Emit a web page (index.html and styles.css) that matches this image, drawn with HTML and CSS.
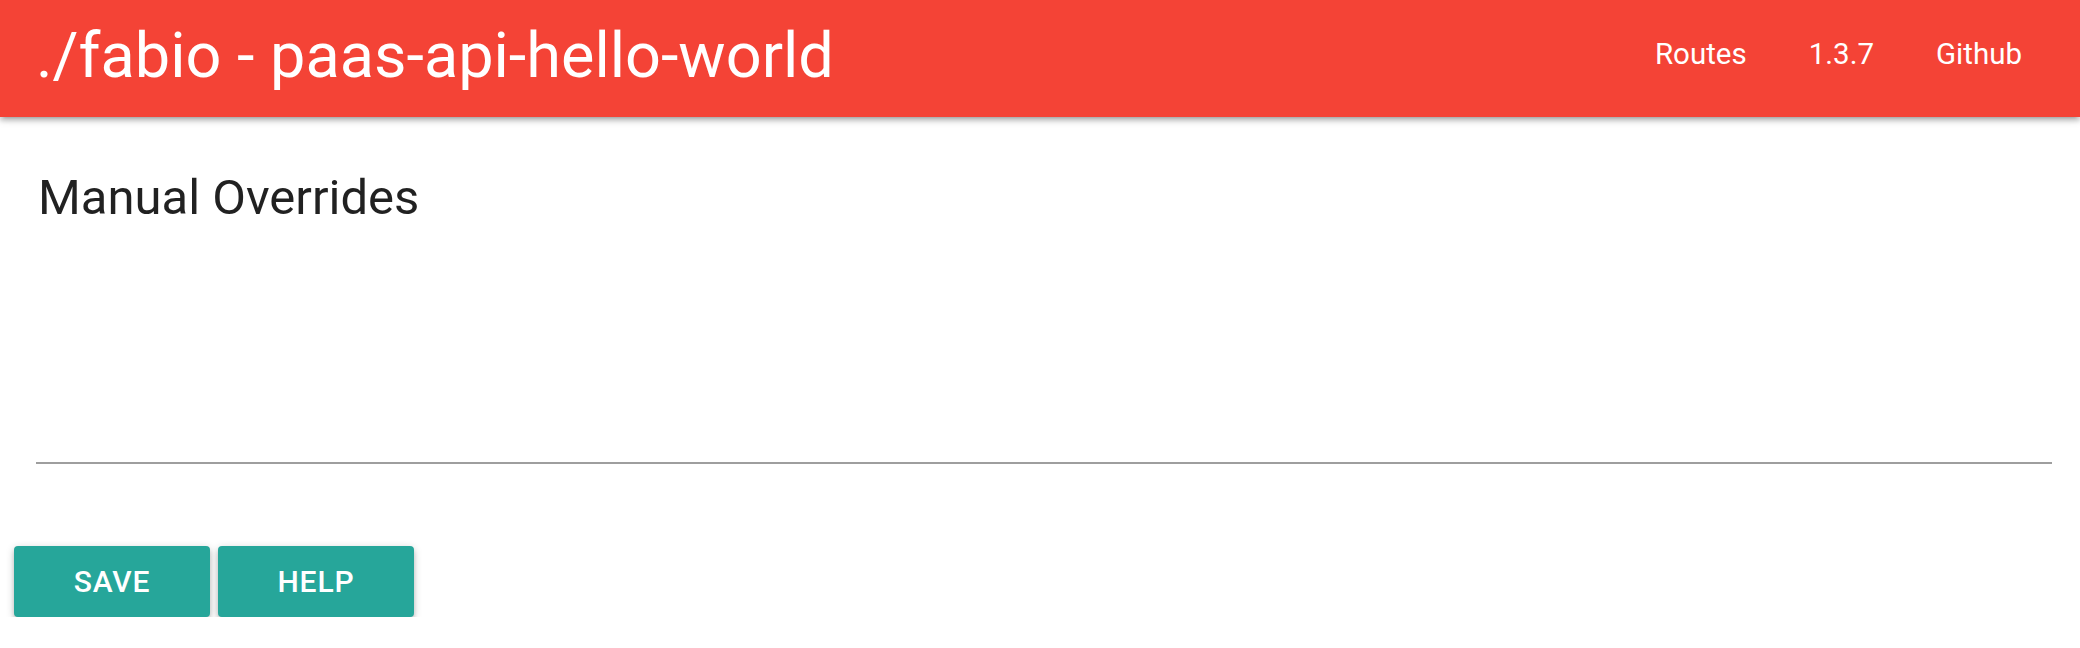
FILE: index.html
```html
<!DOCTYPE html>
<html lang="en">
<head>
    <meta charset="UTF-8">
    <meta name="viewport" content="width=device-width, initial-scale=1.0">
    <title>./fabio - paas-api-hello-world</title>
    <link rel="stylesheet" href="styles.css">
</head>
<body>
    <nav class="topnav">
        <a href="#" class="brand-logo">./fabio - paas-api-hello-world</a>
        <ul class="nav-links">
            <li><a href="#">Routes</a></li>
            <li><a href="#">1.3.7</a></li>
            <li><a href="#">Github</a></li>
        </ul>
    </nav>

    <div class="content">
        <h5 class="section-title">Manual Overrides</h5>

        <form id="overrideForm">
            <div class="input-field">
                <textarea id="overrides" class="overrides-text"></textarea>
            </div>
        </form>

        <div class="actions">
            <button type="button" class="btn">Save</button>
            <button type="button" class="btn">Help</button>
        </div>
    </div>
</body>
</html>
```

FILE: styles.css
```css
body {
    margin: 0;
    font-family: Roboto, "Liberation Sans", sans-serif;
    background-color: #fff;
    color: rgba(0,0,0,0.87);
}
a {
    text-decoration: none;
    color: #fff;
}
.topnav {
    height: 117px;
    background-color: #f44336;
    display: flex;
    justify-content: space-between;
    box-shadow: 0 4px 4px 0 rgba(0,0,0,0.14), 0 5px 2px -4px rgba(0,0,0,0.12), 0 2px 9px 0 rgba(0,0,0,0.2);
}
.brand-logo {
    font-size: 63px;
    line-height: 111px;
    padding-left: 36px;
    white-space: nowrap;
}
.nav-links {
    list-style: none;
    display: flex;
    margin: 0;
    padding: 0 27px 0 0;
}
.nav-links a {
    display: block;
    font-size: 29.5px;
    line-height: 108px;
    padding: 0 31px;
}
.content {
    padding-top: 54px;
}
.section-title {
    font-size: 49px;
    font-weight: 400;
    line-height: 1.1;
    margin: 0;
    padding-left: 38px;
}
.input-field {
    padding: 0 28px 0 36px;
}
.overrides-text {
    display: block;
    width: 100%;
    height: 239px;
    box-sizing: border-box;
    border: none;
    border-bottom: 2px solid #9e9e9e;
    background: transparent;
    resize: none;
    outline: none;
    font-family: inherit;
    font-size: 29px;
}
.actions {
    display: flex;
    gap: 8px;
    padding: 82px 0 0 14px;
}
.btn {
    width: 196px;
    height: 71px;
    background-color: #26a69a;
    color: #fff;
    border: none;
    border-radius: 4px;
    font-family: inherit;
    font-size: 30px;
    font-weight: 500;
    letter-spacing: 0.9px;
    text-transform: uppercase;
    cursor: pointer;
    box-shadow: 0 4px 4px 0 rgba(0,0,0,0.14), 0 5px 2px -4px rgba(0,0,0,0.12), 0 2px 9px 0 rgba(0,0,0,0.2);
}
.btn:hover {
    background-color: #2bbbad;
}
```
